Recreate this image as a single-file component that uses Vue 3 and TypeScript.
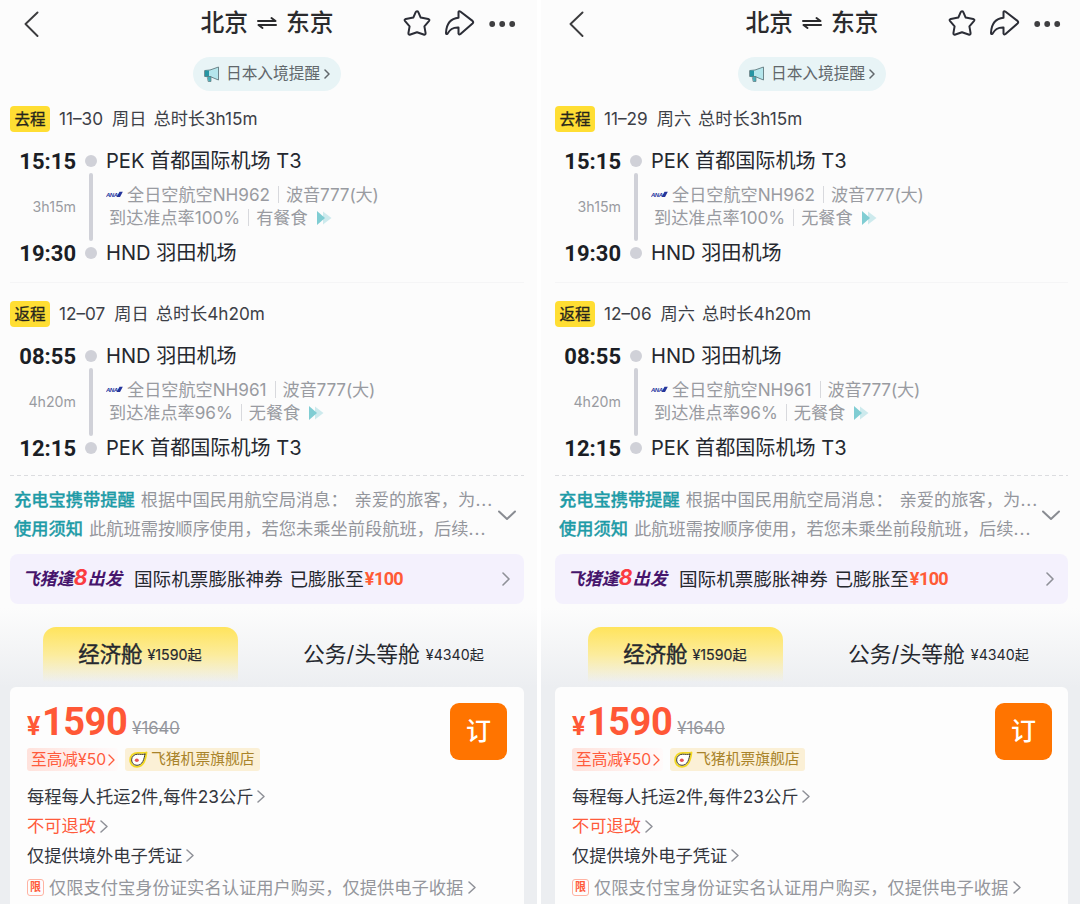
<script setup lang="ts">
interface Leg {
  tag: string
  date: string
  week: string
  total: string
  duration: string
  depTime: string
  depCode: string
  arrTime: string
  arrCode: string
  flight: string
  plane: string
  onTime: string
  meal: string
}

interface Trip {
  id: string
  legs: Leg[]
}

const PEK = 'PEK 首都国际机场 T3'
const HND = 'HND 羽田机场'

function makeTrip(id: string, outDate: string, backDate: string, week: string, outMeal: string): Trip {
  return {
    id,
    legs: [
      {
        tag: '去程', date: outDate, week, total: '总时长3h15m', duration: '3h15m',
        depTime: '15:15', depCode: PEK, arrTime: '19:30', arrCode: HND,
        flight: '全日空航空NH962', plane: '波音777(大)', onTime: '到达准点率100%', meal: outMeal,
      },
      {
        tag: '返程', date: backDate, week, total: '总时长4h20m', duration: '4h20m',
        depTime: '08:55', depCode: HND, arrTime: '12:15', arrCode: PEK,
        flight: '全日空航空NH961', plane: '波音777(大)', onTime: '到达准点率96%', meal: '无餐食',
      },
    ],
  }
}

const trips: Trip[] = [
  makeTrip('left', '11–30', '12–07', '周日', '有餐食'),
  makeTrip('right', '11–29', '12–06', '周六', '无餐食'),
]
</script>

<template>
  <div class="compare">
    <section v-for="trip in trips" :key="trip.id" class="panel" :class="trip.id">
      <header class="header">
        <svg class="back" width="16" height="26" viewBox="0 0 16 26">
          <path d="M13.500 1.500 1.500 13 13.500 25" />
        </svg>
        <h1 class="title">
          <span>北京</span>
          <svg width="20" height="14" viewBox="0 0 20 14">
            <path d="M1 5H18.500L14.500 2M19 9H1.500L5.500 12" />
          </svg>
          <span>东京</span>
        </h1>
        <div class="actions">
          <svg width="28" height="28" viewBox="0 0 28 28">
            <path d="M14 2.200Q14.900 2.200 15.300 3.100L17.700 8.600 25.200 9.900Q27.200 10.600 25.900 12.200L21.400 17.300 22.600 24.100Q22.600 26.300 20.600 25.500L14 23.200 7.400 25.500Q5.400 26.300 5.400 24.100L6.600 17.300 2.100 12.200Q.8 10.600 2.800 9.900L10.300 8.600 12.700 3.100Q13.100 2.200 14 2.200Z" />
          </svg>
          <svg width="30" height="28" viewBox="0 0 30 28">
            <path d="M13.500 2.900Q14 1.700 15.300 2.500L27.500 11.900Q28.800 13.200 27.500 14.500L15.500 25Q13.900 26.200 13.500 24.600V18.500C7.500 18.300 5 20.500 2.300 24.900Q1 25.500 1 23.800C1.500 14.500 5.500 9.500 13.500 8.800Z" />
          </svg>
          <svg class="dots" width="28" height="28" viewBox="0 0 28 28">
            <circle cx="3.200" cy="15" r="2.900" />
            <circle cx="13.200" cy="15" r="2.900" />
            <circle cx="23.200" cy="15" r="2.900" />
          </svg>
        </div>
      </header>

      <div class="pill">
        <svg width="16" height="17" viewBox="0 0 16 17">
          <path d="M1 4.500 6 4 14.500 1V14L6 10.500H1Z" fill="#b4e6ec" stroke="#6c868b" />
          <path d="M1 4.500H5V10.500H1Z" fill="#2695a3" />
          <path d="M3.500 10.500H7V15.500H4.500Z" fill="#45afbb" stroke="#5f7a80" stroke-width=".7" />
        </svg>
        <span>日本入境提醒</span>
        <svg class="chev" width="6" height="10" viewBox="0 0 6 10"><path d="M1 1 5 5 1 9" /></svg>
      </div>

      <template v-for="(leg, i) in trip.legs" :key="leg.tag">
        <div v-if="i > 0" class="divider"></div>
        <div class="date-row" :class="{ first: i === 0 }">
          <span class="tag">{{ leg.tag }}</span>
          <span class="date">{{ leg.date }}</span>
          <span class="week">{{ leg.week }}</span>
          <span>{{ leg.total }}</span>
        </div>
        <div class="leg">
          <div class="times">
            <b>{{ leg.depTime }}</b>
            <span>{{ leg.duration }}</span>
            <b>{{ leg.arrTime }}</b>
          </div>
          <div class="rail">
            <i class="dot"></i>
            <i class="line"></i>
            <i class="dot"></i>
          </div>
          <div class="info">
            <div class="airport">{{ leg.depCode }}</div>
            <div class="details">
              <div class="detail">
                <svg class="ana" width="17" height="7" viewBox="0 0 17 7">
                  <text x="0" y="5.600" textLength="12">ANA</text>
                  <path d="M10.500 6 13.500 .8H16.800L14 6Z" />
                </svg>
                <span>{{ leg.flight }}</span>
                <i class="bar"></i>
                <span>{{ leg.plane }}</span>
              </div>
              <div class="detail second">
                <span>{{ leg.onTime }}</span>
                <i class="bar"></i>
                <span>{{ leg.meal }}</span>
                <svg class="more" width="15" height="14" viewBox="0 0 15 14">
                  <path d="M6 .5 14.500 7 6 13.500Z" fill="#cdeaed" />
                  <path d="M0 0 8 7 0 14Z" fill="#80cdd3" />
                </svg>
              </div>
            </div>
            <div class="airport">{{ leg.arrCode }}</div>
          </div>
        </div>
      </template>

      <div class="notices">
        <div class="notice-text">
          <p><b>充电宝携带提醒</b>根据中国民用航空局消息： 亲爱的旅客，为<span class="ellipsis">...</span></p>
          <p><b>使用须知</b>此航班需按顺序使用，若您未乘坐前段航班，后续<span class="ellipsis">...</span></p>
        </div>
        <svg width="18" height="11" viewBox="0 0 18 11"><path d="M1 1.500 9 9 17 1.500" /></svg>
      </div>

      <div class="banner">
        <span class="slogan">飞猪逢<em>8</em>出发</span>
        <span class="promo">国际机票膨胀神券 已膨胀至</span>
        <b>¥100</b>
        <svg width="8" height="14" viewBox="0 0 8 14"><path d="M1 1 7 7 1 13" /></svg>
      </div>

      <div class="cabins">
        <div class="cabin active"><span>经济舱</span><small>¥1590起</small></div>
        <div class="cabin"><span>公务/头等舱</span><small>¥4340起</small></div>
      </div>

      <div class="card-wrap">
        <div class="card">
          <div class="price-row">
            <span class="yen">¥</span>
            <span class="price">1590</span>
            <del>¥1640</del>
          </div>
          <button class="book">订</button>
          <div class="tags">
            <span class="cut">至高减¥50<svg width="7" height="12" viewBox="0 0 7 12"><path d="M1 1 6 6 1 11" /></svg></span>
            <span class="shop">
              <svg width="19" height="17" viewBox="0 0 19 17">
                <path d="M17.500 1.500C16.800 8 15 15.800 8 15.800 3.800 15.800 1.200 12.800 1.200 9 1.200 4.500 4.500 1.800 8.500 1.800 12 1.800 15 2.200 17.500 1.500Z" fill="#fff" stroke="#f3d81f" stroke-width="1.800" />
                <path d="M15.900 3.100C15.200 8 13.700 14.300 8 14.300 4.700 14.300 2.600 12 2.600 8.900 2.600 5.500 5.300 3.200 8.500 3.200 11.500 3.200 13.500 3.700 15.900 3.100Z" fill="#fff" stroke="#3d3920" stroke-width="1" />
                <ellipse cx="7.800" cy="9.200" rx="2" ry="1.700" fill="#e55456" />
              </svg>飞猪机票旗舰店</span>
          </div>
          <p class="rule">每程每人托运2件,每件23公斤<svg width="8" height="13" viewBox="0 0 8 13"><path d="M1 1 7 6.500 1 12" /></svg></p>
          <p class="rule red">不可退改<svg width="8" height="13" viewBox="0 0 8 13"><path d="M1 1 7 6.500 1 12" /></svg></p>
          <p class="rule">仅提供境外电子凭证<svg width="8" height="13" viewBox="0 0 8 13"><path d="M1 1 7 6.500 1 12" /></svg></p>
          <p class="rule limit"><i>限</i>仅限支付宝身份证实名认证用户购买，仅提供电子收据<svg width="8" height="13" viewBox="0 0 8 13"><path d="M1 1 7 6.500 1 12" /></svg></p>
        </div>
      </div>
    </section>
  </div>
</template>

<style>
body {
  background: #fff;
  overflow: hidden;
}
</style>

<style scoped>
.compare {
  display: flex;
  gap: 4px;
  width: 1080px;
  height: 904px;
  overflow: hidden;
  font-family: Inter, "Noto Sans CJK SC", sans-serif;
  color: #25282f;
}

.panel {
  --pl: 10px;
  --pr: 13px;
  box-sizing: border-box;
  width: 537px;
  height: 904px;
  flex: none;
  overflow: hidden;
  background: #fcfcfc;
  white-space: nowrap;
}

.panel.right {
  --pl: 14px;
  --pr: 12px;
  width: 539px;
}

svg {
  flex: none;
  fill: none;
  stroke-linecap: round;
  stroke-linejoin: round;
}

p {
  margin: 0;
}

.header {
  display: grid;
  grid-template-columns: 180px 154px 1fr;
  align-items: center;
  height: 46px;
  padding-left: var(--pl);
}

.back {
  margin: 2px 0 0 14px;
  stroke: #3c3c3e;
  stroke-width: 1.900;
}

.title {
  display: flex;
  align-items: center;
  justify-content: center;
  gap: 9px;
  margin: 0;
  font-size: 23.800px;
  font-weight: 500;
  line-height: 46px;
  color: #2b2b2d;
}

.title svg {
  stroke: #2b2b2d;
  stroke-width: 2;
}

.actions {
  display: flex;
  margin-left: 59px;
  gap: 14px;
}

.actions svg {
  stroke: #2b2d36;
  stroke-width: 2;
}

.actions .dots {
  fill: #3f3f41;
  stroke: none;
}

.pill {
  display: flex;
  align-items: center;
  box-sizing: border-box;
  width: 148px;
  height: 34px;
  margin: 11px 0 0 calc(var(--pl) + 183px);
  padding-left: 11px;
  border-radius: 17px;
  background: #e8f4f6;
  font-size: 15.700px;
  line-height: 36px;
  color: #61676b;
}

.pill span {
  margin: 0 4px 0 6px;
}

.pill .chev {
  stroke: #61676b;
  stroke-width: 1.500;
}

.date-row {
  display: flex;
  align-items: center;
  height: 26px;
  margin: 18px 0 0 var(--pl);
  font-size: 17.200px;
  line-height: 28px;
  color: #3d4047;
}

.date-row.first {
  margin-top: 15px;
}

.tag {
  width: 40px;
  height: 26px;
  margin-right: 9px;
  border-radius: 4px;
  background: #ffde33;
  color: #25241c;
  font-size: 15.500px;
  line-height: 27px;
  text-align: center;
  -webkit-text-stroke: 0.3px #25241c;
}

.date {
  margin-right: 9px;
}

.week {
  margin-right: 7px;
}

.leg {
  display: flex;
  height: 118px;
  margin: 16px 0 0 var(--pl);
}

.times {
  display: flex;
  flex-direction: column;
  justify-content: space-between;
  align-items: flex-end;
  width: 66px;
  line-height: 26px;
  color: #999ba1;
  font-size: 14.200px;
}

.times b {
  height: 26px;
  font-family: Roboto, sans-serif;
  font-size: 22px;
  line-height: 28px;
  color: #1b1e25;
}

.rail {
  display: flex;
  flex-direction: column;
  align-items: center;
  justify-content: space-between;
  width: 12px;
  padding: 7px 0;
  margin: 0 9px;
}

.dot {
  width: 12px;
  height: 12px;
  border-radius: 50%;
  background: #d0d1d8;
}

.line {
  width: 4px;
  height: 68px;
  border-radius: 2px;
  background: #d0d1d8;
}

.airport {
  height: 26px;
  line-height: 27px;
  font-size: 20.100px;
}

.details {
  padding: 9px 0 11px;
}

.detail {
  display: flex;
  align-items: center;
  height: 23px;
  font-size: 17.150px;
  line-height: 23px;
  color: #999ba1;
}

.detail.second {
  padding-left: 3px;
}

.ana {
  margin-right: 4px;
  fill: #25359c;
}

.ana text {
  font: italic 700 6px "Liberation Sans", sans-serif;
}

.bar {
  width: 1px;
  height: 17px;
  margin: 0 7px 0 8px;
  background: #d8d9dd;
}

.detail:first-child span:last-child {
  letter-spacing: -0.150px;
}

.more {
  margin-left: 9px;
}

.divider {
  height: 1px;
  margin: 16px var(--pr) 0 var(--pl);
  background: #f5f5f6;
}

.notices {
  display: flex;
  align-items: center;
  box-sizing: border-box;
  height: 68px;
  margin: 14px var(--pr) 0 var(--pl);
  padding: 9px 8px 0 4px;
  background: repeating-linear-gradient(90deg, #dcdde0 0 4px, transparent 4px 7px) top / 100% 1px no-repeat;
}

.notice-text {
  flex: 1;
  font-size: 17.250px;
  line-height: 29px;
  color: #94969c;
}

.notice-text b {
  margin-right: 6px;
  color: #1e9ba7;
  font-weight: 500;
  -webkit-text-stroke: 0.3px #1e9ba7;
}

.ellipsis {
  letter-spacing: 1px;
}

.notices p:first-child {
  word-spacing: 2px;
}

.notices svg {
  margin-top: 4px;
  stroke: #898c92;
  stroke-width: 2;
}

.banner {
  display: flex;
  align-items: center;
  height: 50px;
  margin: 11px var(--pr) 0 var(--pl);
  padding: 0 14px 0 12px;
  border-radius: 8px;
  background: #f4f1fd;
  font-size: 18.600px;
  line-height: 50px;
}

.slogan {
  width: 112px;
  font-size: 17.300px;
  font-style: italic;
  font-weight: 700;
  color: #46156c;
}

.slogan em {
  color: #fb3d40;
  font-size: 21px;
  line-height: 1;
}

.promo {
  word-spacing: 1.500px;
}

.banner b {
  font: 700 18px/50px Roboto, sans-serif;
  letter-spacing: -0.600px;
  margin-left: 1px;
  color: #ff5b35;
}

.banner svg {
  margin-left: auto;
  stroke: #8f9198;
  stroke-width: 1.600;
}

.cabins {
  display: flex;
  height: 60px;
  padding: 23px 0 0 calc(var(--pl) + 33px);
  background: linear-gradient(#fcfcfc 5%, #eceef1 100%);
}

.cabin {
  display: flex;
  align-items: center;
  height: 55px;
  margin-left: 65px;
  font-size: 21.800px;
  line-height: 57px;
}

.cabin.active {
  justify-content: center;
  box-sizing: border-box;
  width: 195px;
  margin: 0;
  padding-right: 1px;
  border-radius: 13px 13px 0 0;
  background: linear-gradient(#ffe45c, #fcec9c 50%, #eceef100);
  font-size: 21.400px;
}

.cabin.active span {
  -webkit-text-stroke: 0.4px #25282f;
}

.cabin small {
  margin-left: 6px;
  font-size: 14.200px;
}

.cabin.active small {
  margin-left: 5px;
  -webkit-text-stroke: 0.2px #25282f;
}

.card-wrap {
  height: 217px;
  padding: 0 var(--pr) 0 var(--pl);
  background: #eceef1;
}

.card {
  position: relative;
  height: 217px;
  box-sizing: border-box;
  padding: 14px 17px 0;
  border-radius: 6px 6px 0 0;
  background: #fdfdfd;
}

.price-row {
  display: flex;
  align-items: baseline;
  height: 47px;
  line-height: 42px;
  font-family: Roboto, sans-serif;
  color: #ff5836;
  font-weight: 700;
}

.yen {
  width: 15px;
  font-size: 25px;
}

.price {
  font-size: 38px;
  letter-spacing: -0.500px;
}

.price-row del {
  position: relative;
  top: -1px;
  margin-left: 5px;
  font: 400 16.700px Inter, sans-serif;
  color: #94969c;
}

.book {
  position: absolute;
  top: 16px;
  right: 17px;
  width: 57px;
  height: 57px;
  padding: 0 0 4px;
  border: none;
  border-radius: 9px;
  background: #ff7400;
  color: #fff;
  font: 500 25px/53px "Noto Sans CJK SC", sans-serif;
}

.right .book {
  right: 16px;
}

.tags {
  display: flex;
  gap: 7px;
  height: 23px;
  margin-bottom: 11px;
}

.tags span {
  display: flex;
  align-items: center;
  box-sizing: border-box;
  height: 23px;
  border-radius: 3px;
  line-height: 23px;
}

.cut {
  width: 91px;
  padding-left: 4px;
  background: linear-gradient(90deg, #ffe2dc, #fffafa);
  color: #ff5b3c;
  font-size: 15.700px;
}

.cut svg {
  margin-left: 2px;
  stroke: #ff5b3c;
  stroke-width: 1.300;
}

.shop {
  width: 135px;
  padding-left: 4px;
  background: #fbf0d6;
  color: #a98329;
  font-size: 14.800px;
}

.shop svg {
  margin-right: 3px;
}

.rule {
  display: flex;
  align-items: center;
  height: 29.600px;
  font-size: 17.250px;
  line-height: 30px;
  color: #33363d;
}

.rule svg {
  margin-left: 4px;
  stroke: #8f9198;
  stroke-width: 1.500;
}

.rule.red {
  color: #ff5b3c;
}

.rule.limit {
  padding-top: 2px;
  font-size: 17.280px;
  line-height: 29px;
  color: #94969c;
}

.limit svg {
  margin-left: 5px;
}

.limit i {
  box-sizing: border-box;
  width: 17px;
  height: 17px;
  margin-right: 5px;
  border: 1px solid #ffb3a3;
  border-radius: 3px;
  color: #ff5b3c;
  font-size: 11px;
  font-style: normal;
  font-weight: 700;
  line-height: 15px;
  text-align: center;
}
</style>
